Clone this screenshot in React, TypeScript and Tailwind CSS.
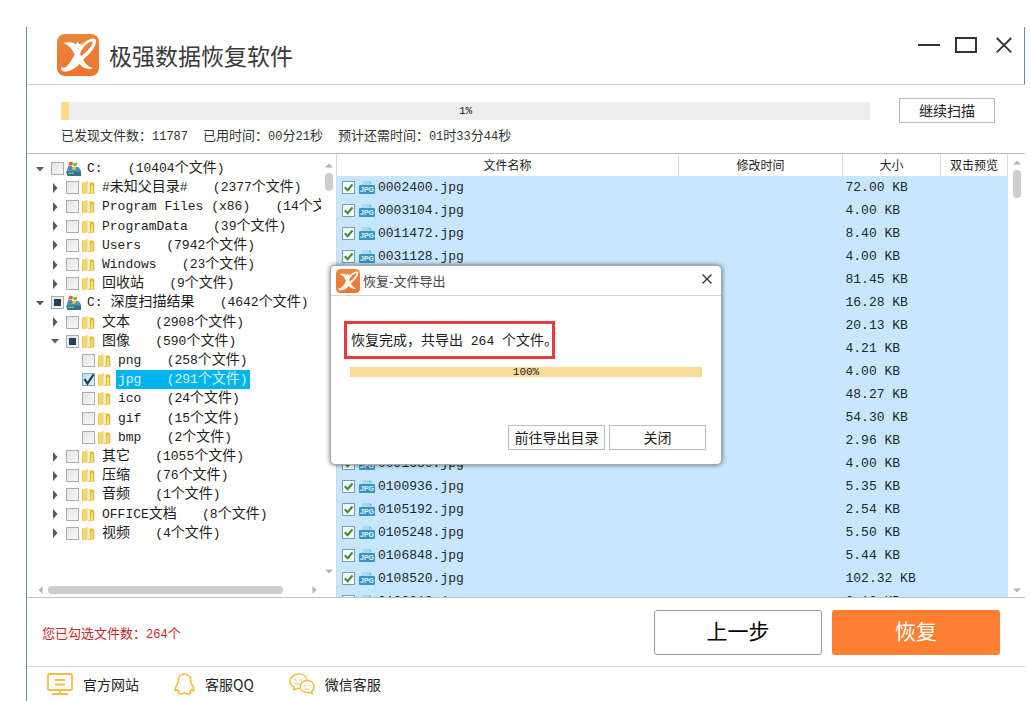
import { Fragment, type ReactNode } from "react";

const MONO = "font-['Liberation_Mono','Noto_Sans_CJK_SC',monospace]";
const SANS = "font-['Noto_Sans_CJK_SC',sans-serif]";

/* Latin runs are set one pixel smaller than the Chinese text around them. */
function Mixed({ text, latin }: { text: string; latin: string }) {
  const runs = text.match(/[\x20-\x7e]+|[^\x20-\x7e]+/g) ?? [];
  return (
    <>
      {runs.map((run, i) =>
        /^[\x20-\x7e]/.test(run) ? (
          <span key={i} className={latin}>
            {run}
          </span>
        ) : (
          <Fragment key={i}>{run}</Fragment>
        ),
      )}
    </>
  );
}

function Logo({ className }: { className: string }) {
  return (
    <svg viewBox="0 0 42 42" className={className} aria-hidden="true">
      <defs>
        <linearGradient id="logo-bg" x1="0" y1="0" x2="0" y2="1">
          <stop offset="0" stopColor="#e8873f" />
          <stop offset="1" stopColor="#ee7430" />
        </linearGradient>
      </defs>
      <rect width="42" height="42" rx="8" fill="url(#logo-bg)" />
      <path
        d="M6.500 9c3.500-.9 7.500-.9 10.500 0 2.300 2 3.500 5.500 5 9l4 7.500c2 3.800 5 7.200 10 8.700-3.500 1-8 .8-10.500-1.200-3.200-2.700-5-6.500-7-11C16 16.500 13 11.500 6.500 9z"
        fill="#fff"
      />
      <path
        d="M22.500 13C27.500 7 35 2.800 38.200 5c2.800 2.600-1.200 10.500-7.700 16.500-3 2.800-5.300 5-7.300 7.700C18.500 34.500 12 38.300 7 37.600c-2.800-.5-3.300-3-2.500-5.300 1 2 3 1.800 5 .2 3.300-2.800 5.500-7.500 8-11.500 1.500-2.800 3.200-5.600 5-8zM25.500 14.500c-1.800 2.500-2.800 5-2.500 8.500 5.500-3.800 13-11.500 12.500-15-1.500-1.800-6.500 2.300-10 6.500z"
        fill="#fff"
        fillRule="evenodd"
      />
      <path d="M20.300 7.500l1.500 2.400 2.800-.1-1.600 2.300.8 2.700-2.700-.9-2.300 1.600v-2.800l-2.200-1.800 2.700-.8z" fill="#fff" />
    </svg>
  );
}

function DriveIcon() {
  return (
    <svg viewBox="0 0 15 15" className="h-[15px] w-[15px]" aria-hidden="true">
      <path d="M1 9l2.500-3h9L15 9.500v4.500H1z" fill="#4b93b5" />
      <path d="M0 10.500h10l5 1V15H1.500z" fill="#2f6f8f" />
      <path d="M2 11.500h6v1.500H2z" fill="#79c257" />
      <path d="M3 1.500C4.500.5 5.500.8 7 1.500L6.300 4.500C5 4 4 4 2.300 4.800z" fill="#e0632c" />
      <path d="M7.600 1.700c1.400.5 2.500.4 3.900-.4l-.8 3.100c-1.300.7-2.400.7-3.800.2z" fill="#86b840" />
      <path d="M2.100 5.400c1.500-.7 2.700-.7 4-.2l-.8 3.200c-1.300-.5-2.500-.5-4 .2z" fill="#4a8ccb" />
      <path d="M6.800 5.400c1.300.5 2.400.4 3.800-.3l-.8 3.100c-1.300.8-2.400.8-3.800.3z" fill="#f2c133" />
    </svg>
  );
}

function FolderIcon() {
  return (
    <svg viewBox="0 0 15 15" className="h-[15px] w-[15px]" aria-hidden="true">
      <path d="M1.500 2.500L7 1v12.500l-5.500.7z" fill="#f0d66c" />
      <path d="M6.500 2.500h5.200l1.300 1v10L7 14.200z" fill="#dfb93c" />
      <path d="M6.500 1l2.300 1.500v10L6.500 14.500z" fill="#fdf6cc" />
      <path d="M10 5.500l2.300-1v9l-2.800.5z" fill="#f3dc7c" />
      <path d="M1.500 2.500v11.500M13 3.500v10" stroke="#d3b03f" strokeWidth=".6" />
    </svg>
  );
}

function JpgIcon() {
  return (
    <svg viewBox="0 0 16 15" className="h-[15px] w-4 shrink-0" aria-hidden="true">
      <path d="M3 1h7.500L13 3.500V6H3z" fill="#a5daf3" />
      <path d="M10.500 1v2.500H13z" fill="#5eb4dc" />
      <rect y="5" width="16" height="9" rx="1" fill="#3795c4" />
      <text x="8" y="12.300" textAnchor="middle" fontSize="7" fontWeight="700" fill="#e3f5fd" fontFamily="Liberation Sans, sans-serif">
        JPG
      </text>
    </svg>
  );
}

type Check = "off" | "on" | "partial";

type Node = {
  label: string;
  count: string;
  level: 0 | 1 | 2;
  arrow?: "open" | "closed";
  check?: Check;
  selected?: boolean;
};

const nodes: Node[] = [
  { label: "C:", count: "(10404个文件)", level: 0, arrow: "open" },
  { label: "#未知父目录#", count: "(2377个文件)", level: 1, arrow: "closed" },
  { label: "Program Files (x86)", count: "(14个文件)", level: 1, arrow: "closed" },
  { label: "ProgramData", count: "(39个文件)", level: 1, arrow: "closed" },
  { label: "Users", count: "(7942个文件)", level: 1, arrow: "closed" },
  { label: "Windows", count: "(23个文件)", level: 1, arrow: "closed" },
  { label: "回收站", count: "(9个文件)", level: 1, arrow: "closed" },
  { label: "C: 深度扫描结果", count: "(4642个文件)", level: 0, arrow: "open", check: "partial" },
  { label: "文本", count: "(2908个文件)", level: 1, arrow: "closed" },
  { label: "图像", count: "(590个文件)", level: 1, arrow: "open", check: "partial" },
  { label: "png", count: "(258个文件)", level: 2 },
  { label: "jpg", count: "(291个文件)", level: 2, check: "on", selected: true },
  { label: "ico", count: "(24个文件)", level: 2 },
  { label: "gif", count: "(15个文件)", level: 2 },
  { label: "bmp", count: "(2个文件)", level: 2 },
  { label: "其它", count: "(1055个文件)", level: 1, arrow: "closed" },
  { label: "压缩", count: "(76个文件)", level: 1, arrow: "closed" },
  { label: "音频", count: "(1个文件)", level: 1, arrow: "closed" },
  { label: "OFFICE文档", count: "(8个文件)", level: 1, arrow: "closed" },
  { label: "视频", count: "(4个文件)", level: 1, arrow: "closed" },
];

const indent = ["pl-[5px]", "pl-5", "pl-9"];

function TreeRow({ node }: { node: Node }) {
  const check = node.check ?? "off";
  return (
    <li className={`flex items-center whitespace-pre ${indent[node.level]}`}>
      <span className="mr-[3px] grid w-4 shrink-0 place-items-center">
        {node.arrow && (
          <svg viewBox="0 0 10 10" className="h-[10px] w-[10px]" aria-hidden="true">
            <path d={node.arrow === "open" ? "M1 3h8L5 7.500z" : "M3 0l4.500 5L3 10z"} fill="#5a5a5a" />
          </svg>
        )}
      </span>
      <label className="flex items-center">
        <span className="relative mr-0.5 h-[13px] w-[13px] shrink-0">
          <input
            type="checkbox"
            defaultChecked={check === "on"}
            ref={(el) => {
              if (el) el.indeterminate = check === "partial";
            }}
            className="block h-[13px] w-[13px] appearance-none border border-[#a9adb0] bg-linear-to-br from-[#e2e3e4] to-[#fafafa] checked:border-[#7ea6bd] checked:from-[#bcdcec] checked:to-[#e4f3fa]"
          />
          {check === "partial" && <span className="absolute inset-[3px] bg-[#21405e]" />}
          {check === "on" && (
            <svg viewBox="0 0 13 13" className="absolute inset-0" aria-hidden="true">
              <path d="M2.500 6l3 4.500L11.500 1.500" fill="none" stroke="#1f3f5c" strokeWidth="2.200" />
            </svg>
          )}
        </span>
        {node.level === 0 ? <DriveIcon /> : <FolderIcon />}
        <span
          className={`ml-1 px-0.5 text-[14px] leading-[19px] ${node.selected ? "bg-[#02b4ee] text-[#d8f4ff]" : "text-[#1c1c1c]"}`}
        >
          <Mixed text={node.label} latin="text-[13px]" />
          {"   "}
          <Mixed text={node.count} latin="text-[13px]" />
        </span>
      </label>
    </li>
  );
}

const files: [string, string][] = [
  ["0002400.jpg", "72.00 KB"],
  ["0003104.jpg", "4.00 KB"],
  ["0011472.jpg", "8.40 KB"],
  ["0031128.jpg", "4.00 KB"],
  ["0036352.jpg", "81.45 KB"],
  ["0041216.jpg", "16.28 KB"],
  ["0048640.jpg", "20.13 KB"],
  ["0053904.jpg", "4.21 KB"],
  ["0060872.jpg", "4.00 KB"],
  ["0067544.jpg", "48.27 KB"],
  ["0074208.jpg", "54.30 KB"],
  ["0083016.jpg", "2.96 KB"],
  ["0091680.jpg", "4.00 KB"],
  ["0100936.jpg", "5.35 KB"],
  ["0105192.jpg", "2.54 KB"],
  ["0105248.jpg", "5.50 KB"],
  ["0106848.jpg", "5.44 KB"],
  ["0108520.jpg", "102.32 KB"],
  ["0109312.jpg", "6.12 KB"],
];

function FileTable() {
  return (
    <table className="w-full table-fixed border-collapse">
      <colgroup>
        <col />
        <col className="w-[164px]" />
        <col className="w-[98px]" />
        <col className="w-[67px]" />
      </colgroup>
      <thead>
        <tr className={`h-[22px] text-[12px] leading-[22px] text-[#222] ${SANS}`}>
          {["文件名称", "修改时间", "大小", "双击预览"].map((title) => (
            <th key={title} className="border-r border-[#dcdcdc] p-0 font-normal">
              {title}
            </th>
          ))}
        </tr>
      </thead>
      <tbody className={`bg-[#c8e7ff] text-[13px] text-[#1b2733] ${MONO}`}>
        {files.map(([name, size]) => (
          <tr key={name} className="h-[23px]">
            <td className="p-0 pl-[5px]">
              <label className="flex h-[23px] items-center">
                <span className="relative mr-1 h-[13px] w-[13px] shrink-0">
                  <input
                    type="checkbox"
                    defaultChecked
                    className="peer block h-[13px] w-[13px] appearance-none border border-[#6e9fbd] bg-[#f7fcf7]"
                  />
                  <svg viewBox="0 0 13 13" className="pointer-events-none absolute inset-0 hidden peer-checked:block" aria-hidden="true">
                    <path d="M2.800 6.200l2.800 3 4.900-5.700" fill="none" stroke="#3f8a2c" strokeWidth="2" />
                  </svg>
                </span>
                <JpgIcon />
                <span className="ml-[3px]">{name}</span>
              </label>
            </td>
            <td className="p-0" />
            <td className="p-0 pl-[3px] whitespace-nowrap">{size}</td>
            <td className="p-0" />
          </tr>
        ))}
      </tbody>
    </table>
  );
}

const arrowPaths = {
  up: "M1 6.500h8L5 2.500z",
  down: "M1 3.500h8l-4 4z",
  left: "M6.500 1v8l-4-4z",
  right: "M3.500 1v8l4-4z",
};

function ScrollArrow({ dir, label }: { dir: keyof typeof arrowPaths; label: string }) {
  return (
    <button type="button" aria-label={label} className="block h-[10px] w-[10px] shrink-0">
      <svg viewBox="0 0 10 10" aria-hidden="true">
        <path d={arrowPaths[dir]} fill="#b3b3b3" />
      </svg>
    </button>
  );
}

function FooterLink({ icon, children }: { icon: ReactNode; children: ReactNode }) {
  return (
    <a href="#" className="flex items-center gap-[10px]">
      {icon}
      {children}
    </a>
  );
}

function ExportDialog() {
  return (
    <div
      role="dialog"
      aria-label="恢复-文件导出"
      className="flex w-[392px] flex-col rounded-[5px] border border-[#a8a8a8] bg-white pb-[14px] shadow-[0_0_5px_rgba(0,0,0,0.55)]"
    >
      <div className="flex h-[30px] items-center border-b border-[#d4d4d4] pr-2 pl-[5px]">
        <Logo className="h-6 w-6" />
        <h2 className={`ml-[3px] flex-1 text-[13px] text-[#444] ${SANS}`}>恢复-文件导出</h2>
        <button type="button" aria-label="关闭窗口" className="mb-1">
          <svg viewBox="0 0 12 12" className="h-3 w-3" aria-hidden="true">
            <path d="M1.500 1.500l9 9M10.500 1.500l-9 9" stroke="#333" strokeWidth="1.300" />
          </svg>
        </button>
      </div>
      <p
        className={`mt-[25px] ml-[13px] h-[38px] w-[211px] overflow-hidden border-[3px] border-[#e83b40] pl-1 text-[14px] leading-[35px] whitespace-pre text-[#1c1c1c] ${MONO}`}
      >
        <Mixed text="恢复完成，共导出 264 个文件。" latin="text-[13px]" />
      </p>
      <div
        role="progressbar"
        aria-label="导出进度"
        aria-valuenow={100}
        className={`mx-[19px] mt-2 flex h-[10px] items-center justify-center bg-[#f9dc97] text-[11px] leading-[10px] text-[#222] ${MONO}`}
      >
        100%
      </div>
      <div className={`mt-12 flex justify-end gap-1 pr-[15px] text-[14px] text-[#1c1c1c] ${SANS}`}>
        <button type="button" className="h-[25px] w-[97px] border border-[#bdbdbd] bg-white pb-0.5 leading-none">
          前往导出目录
        </button>
        <button type="button" className="h-[25px] w-[97px] border border-[#bdbdbd] bg-white pb-0.5 leading-none">
          关闭
        </button>
      </div>
    </div>
  );
}

export default function App() {
  return (
    <div className={`h-screen bg-white pt-[27px] pr-[6px] pl-[26px] ${SANS}`}>
      <div className="relative flex h-full flex-col overflow-hidden border-l border-[#5c91bb]">
        <header className="flex h-[58px] shrink-0 items-center border-r border-b border-r-[#5c91bb] border-b-[#cfcfcf] pr-3 pl-[30px]">
          <Logo className="mb-0.5 h-[42px] w-[42px]" />
          <h1 className="ml-[10px] flex-1 text-[23px] leading-none font-normal text-[#3a3a3a]">极强数据恢复软件</h1>
          <div className="mb-5 flex items-center gap-[15px]">
            <button type="button" aria-label="最小化">
              <svg viewBox="0 0 22 18" className="h-[18px] w-[22px]" aria-hidden="true">
                <path d="M0 8h22" stroke="#333" strokeWidth="2" />
              </svg>
            </button>
            <button type="button" aria-label="最大化">
              <svg viewBox="0 0 22 18" className="h-[18px] w-[22px]" aria-hidden="true">
                <rect x="1" y="1" width="20" height="14" fill="none" stroke="#333" strokeWidth="2" />
              </svg>
            </button>
            <button type="button" aria-label="关闭" className="ml-1">
              <svg viewBox="0 0 16 18" className="h-[18px] w-4" aria-hidden="true">
                <path d="M.8 1l14.400 14.400M15.200 1L.8 15.400" stroke="#333" strokeWidth="1.800" />
              </svg>
            </button>
          </div>
        </header>

        <section className="flex h-[69px] shrink-0 flex-col border-b border-[#b9b9b9] pt-[13px] pr-[30px] pl-[34px]">
          <div className="flex items-center gap-[29px]">
            <div
              role="progressbar"
              aria-label="扫描进度"
              aria-valuenow={1}
              className="relative h-[18px] flex-1 bg-[#eeeeee]"
            >
              <div className="h-full w-[1%] bg-[#fbd98d]" />
              <span className={`absolute inset-0 text-center text-[11px] leading-[18px] text-[#111] ${MONO}`}>1%</span>
            </div>
            <button type="button" className="h-[25px] w-24 border border-[#b8b8b8] bg-white pb-0.5 text-[14px] leading-none text-[#1c1c1c]">
              继续扫描
            </button>
          </div>
          <div className={`mt-[5px] flex gap-[15px] text-[13px] leading-[18px] whitespace-pre text-[#333] ${MONO}`}>
            <span>
              <Mixed text="已发现文件数：11787" latin="text-[12px]" />
            </span>
            <span>
              <Mixed text="已用时间：00分21秒" latin="text-[12px]" />
            </span>
            <span>
              <Mixed text="预计还需时间：01时33分44秒" latin="text-[12px]" />
            </span>
          </div>
        </section>

        <main className="flex min-h-0 flex-1 border-b border-[#c2c2c2]">
          <div className="flex w-[310px] shrink-0 flex-col border-r border-[#d5d9dc]">
            <div className="flex min-h-0 flex-1">
              <ul className={`mt-[5px] grid h-96 min-w-0 flex-1 auto-rows-fr overflow-hidden ${MONO}`}>
                {nodes.map((node, i) => (
                  <TreeRow key={i} node={node} />
                ))}
              </ul>
              <div className="flex w-[15px] flex-col items-center pt-[7px]">
                <ScrollArrow dir="up" label="向上滚动" />
                <div className="mt-0.5 h-[18px] w-2 rounded-full bg-[#cdcdcd]" />
                <div className="flex-1" />
                <ScrollArrow dir="down" label="向下滚动" />
              </div>
            </div>
            <div className="mt-1.5 flex h-[15px] items-center pr-[17px] pl-[9px]">
              <ScrollArrow dir="left" label="向左滚动" />
              <div className="ml-0.5 h-2 w-[235px] rounded-full bg-[#cdcdcd]" />
              <div className="flex-1" />
              <ScrollArrow dir="right" label="向右滚动" />
            </div>
          </div>
          <div className="min-w-0 flex-1 overflow-hidden">
            <FileTable />
          </div>
          <div className="flex w-[17px] shrink-0 flex-col items-center pt-1 pb-0.5">
            <ScrollArrow dir="up" label="列表向上滚动" />
            <div className="mt-0.5 h-7 w-2 rounded-full bg-[#cdcdcd]" />
            <div className="flex-1" />
            <ScrollArrow dir="down" label="列表向下滚动" />
          </div>
        </main>

        <section className="flex h-[69px] shrink-0 items-center gap-[10px] border-b border-[#cfd6dc] pt-px pr-[25px] pl-[15px]">
          <p className={`flex-1 pt-1 text-[13px] text-[#c4262b] ${MONO}`}>
            <Mixed text="您已勾选文件数：264个" latin="text-[12px]" />
          </p>
          <button type="button" className="h-[45px] w-[168px] rounded-[3px] border border-[#999] bg-white pb-1 text-[21px] leading-none text-black">
            上一步
          </button>
          <button type="button" className="h-[45px] w-[168px] rounded-[3px] bg-[#ff7f32] pb-1 text-[21px] leading-none text-white">
            恢复
          </button>
        </section>

        <footer className="flex h-[34px] shrink-0 items-center gap-[35px] pl-5 text-[14px] text-[#222]">
          <FooterLink
            icon={
              <svg viewBox="0 0 26 22" className="h-[22px] w-[26px]" fill="none" stroke="#f2bd45" strokeWidth="1.800" aria-hidden="true">
                <rect x="1" y="1" width="24" height="16" rx="1.500" />
                <path d="M8 7h10M8 11.500h10M13 17v3.500M5 21h16" />
              </svg>
            }
          >
            官方网站
          </FooterLink>
          <FooterLink
            icon={
              <svg viewBox="0 0 21 22" className="h-[22px] w-[21px]" fill="none" stroke="#f2bd45" strokeWidth="1.600" strokeLinejoin="round" aria-hidden="true">
                <path d="M10.500 1C6.500 1 4.300 4 4.300 8c0 1.500-.3 2-1 3.200C1.800 13.500.8 15.500 1.200 17.300c.3.800 1.500.2 2.300-1 .4 1 .9 1.700 1.700 2.400-1.500.7-1.200 2.300 1 2.300 1.800 0 3.300-.4 4.300-1.200 1 .8 2.500 1.200 4.300 1.200 2.200 0 2.500-1.600 1-2.300.8-.7 1.300-1.400 1.700-2.400.8 1.200 2 1.800 2.300 1 .4-1.800-.6-3.800-2.100-6.100-.7-1.200-1-1.700-1-3.200 0-4-2.200-7-6.200-7z" />
              </svg>
            }
          >
            客服QQ
          </FooterLink>
          <FooterLink
            icon={
              <svg viewBox="0 0 26 22" className="h-[22px] w-[26px]" fill="none" stroke="#f2bd45" strokeWidth="1.500" strokeLinejoin="round" aria-hidden="true">
                <path d="M11.500 15.500c-1 .2-2.300.1-3.600-.2L4.500 17l.7-2.900C2.500 12.700 1 10.700 1 8.200 1 4.200 4.800 1 9.700 1c4.500 0 8 2.600 8.600 6.200" />
                <path d="M18.200 7.500c-4 0-7 2.700-7 6s3 6.100 7 6.100c.9 0 1.700-.1 2.500-.4l2.600 1.600-.6-2.400c1.500-1.200 2.400-2.900 2.400-4.900 0-3.300-3-6-6.900-6z" />
                <path d="M6.500 6v1.500M12.500 6v1.500M15.800 12v1.300M20.500 12v1.300" />
                <path d="M6 9.800c2 1.600 4 1.600 5.500.8M16 15.500c1.500 1.200 3 1.200 4.500 0" strokeWidth="1" />
              </svg>
            }
          >
            微信客服
          </FooterLink>
        </footer>

        <div className="absolute inset-0 flex items-center justify-center pt-0.5">
          <ExportDialog />
        </div>
      </div>
    </div>
  );
}
